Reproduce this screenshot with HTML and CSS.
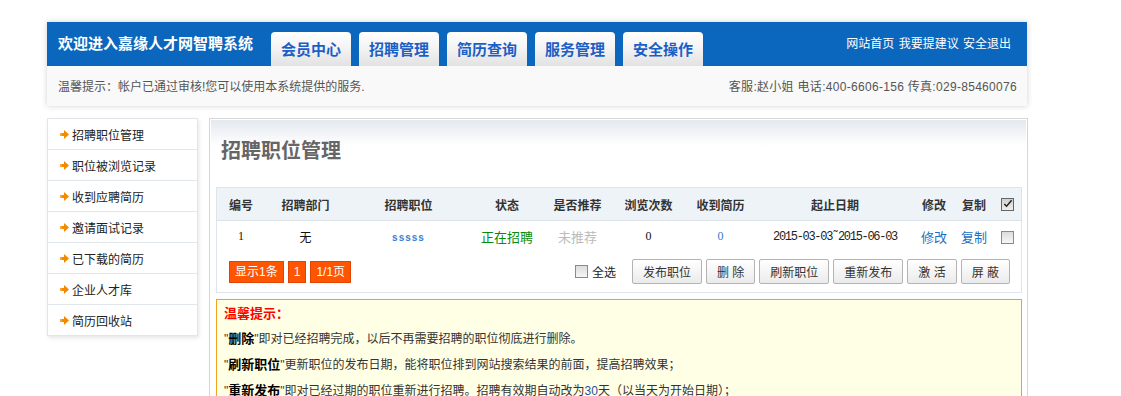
FILE: index.html
```html
<!DOCTYPE html>
<html lang="zh-CN">
<head>
<meta charset="utf-8">
<title>会员中心 - 招聘职位管理</title>
<link rel="stylesheet" href="styles.css">
</head>
<body>
<div class="page">

  <div class="top">
    <div class="topbar">
      <div class="logo">欢迎进入嘉缘人才网智聘系统</div>
      <ul class="tabs">
        <li><a href="#">会员中心</a></li>
        <li><a href="#">招聘管理</a></li>
        <li><a href="#">简历查询</a></li>
        <li><a href="#">服务管理</a></li>
        <li><a href="#">安全操作</a></li>
      </ul>
      <div class="links"><a href="#">网站首页</a> <a href="#">我要提建议</a> <a href="#">安全退出</a></div>
    </div>
    <div class="notice">
      <span>温馨提示：帐户已通过审核!您可以使用本系统提供的服务.</span>
      <span class="tel">客服:赵小姐 电话:400-6606-156 传真:029-85460076</span>
    </div>
  </div>

  <div class="body">
    <ul class="side">
      <li><a href="#"><i class="arrow"><svg width="9" height="9" viewBox="0 0 9 9"><rect x="0" y="3" width="2" height="3" fill="#f7a53a"/><rect x="2" y="3" width="3" height="3" fill="#f28a00"/><polygon points="4,0 9,4.5 4,9" fill="#f28a00"/></svg></i>招聘职位管理</a></li>
      <li><a href="#"><i class="arrow"><svg width="9" height="9" viewBox="0 0 9 9"><rect x="0" y="3" width="2" height="3" fill="#f7a53a"/><rect x="2" y="3" width="3" height="3" fill="#f28a00"/><polygon points="4,0 9,4.5 4,9" fill="#f28a00"/></svg></i>职位被浏览记录</a></li>
      <li><a href="#"><i class="arrow"><svg width="9" height="9" viewBox="0 0 9 9"><rect x="0" y="3" width="2" height="3" fill="#f7a53a"/><rect x="2" y="3" width="3" height="3" fill="#f28a00"/><polygon points="4,0 9,4.5 4,9" fill="#f28a00"/></svg></i>收到应聘简历</a></li>
      <li><a href="#"><i class="arrow"><svg width="9" height="9" viewBox="0 0 9 9"><rect x="0" y="3" width="2" height="3" fill="#f7a53a"/><rect x="2" y="3" width="3" height="3" fill="#f28a00"/><polygon points="4,0 9,4.5 4,9" fill="#f28a00"/></svg></i>邀请面试记录</a></li>
      <li><a href="#"><i class="arrow"><svg width="9" height="9" viewBox="0 0 9 9"><rect x="0" y="3" width="2" height="3" fill="#f7a53a"/><rect x="2" y="3" width="3" height="3" fill="#f28a00"/><polygon points="4,0 9,4.5 4,9" fill="#f28a00"/></svg></i>已下载的简历</a></li>
      <li><a href="#"><i class="arrow"><svg width="9" height="9" viewBox="0 0 9 9"><rect x="0" y="3" width="2" height="3" fill="#f7a53a"/><rect x="2" y="3" width="3" height="3" fill="#f28a00"/><polygon points="4,0 9,4.5 4,9" fill="#f28a00"/></svg></i>企业人才库</a></li>
      <li><a href="#"><i class="arrow"><svg width="9" height="9" viewBox="0 0 9 9"><rect x="0" y="3" width="2" height="3" fill="#f7a53a"/><rect x="2" y="3" width="3" height="3" fill="#f28a00"/><polygon points="4,0 9,4.5 4,9" fill="#f28a00"/></svg></i>简历回收站</a></li>
    </ul>

    <div class="main">
      <div class="main-in">
        <h2>招聘职位管理</h2>

        <div class="list">
          <table class="jobs">
            <colgroup>
              <col style="width:48px"><col style="width:81px"><col style="width:125px"><col style="width:72px">
              <col style="width:69px"><col style="width:73px"><col style="width:71px"><col style="width:158px">
              <col style="width:40px"><col style="width:40px"><col style="width:27px">
            </colgroup>
            <thead>
              <tr>
                <th>编号</th><th>招聘部门</th><th>招聘职位</th><th>状态</th><th>是否推荐</th>
                <th>浏览次数</th><th>收到简历</th><th>起止日期</th><th>修改</th><th>复制</th>
                <th><span class="chk on"><svg width="12" height="12" viewBox="0 0 12 12"><path d="M2.5 6 L5 8.5 L10.5 2" fill="none" stroke="#222" stroke-width="1.6"/></svg></span></th>
              </tr>
            </thead>
            <tbody>
              <tr>
                <td class="num">1</td>
                <td>无</td>
                <td><a class="job" href="#">sssss</a></td>
                <td class="green">正在招聘</td>
                <td class="gray">未推荐</td>
                <td class="num">0</td>
                <td class="num blue">0</td>
                <td class="date">2015-03-03˜2015-06-03</td>
                <td><a class="op" href="#">修改</a></td>
                <td><a class="op" href="#">复制</a></td>
                <td><span class="chk"></span></td>
              </tr>
            </tbody>
          </table>

          <div class="pager">
            <div class="pages">
              <span>显示1条</span><span>1</span><span>1/1页</span>
            </div>
            <label class="all"><span class="chk"></span>全选</label>
            <div class="btns">
              <button>发布职位</button>
              <button>删 除</button>
              <button>刷新职位</button>
              <button>重新发布</button>
              <button>激 活</button>
              <button>屏 蔽</button>
            </div>
          </div>
        </div>

        <div class="tips">
          <h3>温馨提示：</h3>
          <p>"<b>删除</b>"即对已经招聘完成，以后不再需要招聘的职位彻底进行删除。</p>
          <p>"<b>刷新职位</b>"更新职位的发布日期，能将职位排到网站搜索结果的前面，提高招聘效果；</p>
          <p>"<b>重新发布</b>"即对已经过期的职位重新进行招聘。招聘有效期自动改为<em>30</em>天（以当天为开始日期）；</p>
        </div>
      </div>
    </div>
  </div>

</div>
</body>
</html>
```

FILE: styles.css
```css
body {
  margin: 0;
  background: #fff;
  font-family: "Liberation Sans", "Noto Sans CJK SC", sans-serif;
  font-size: 12px;
  color: #333;
}

a {
  text-decoration: none;
}

ul {
  list-style: none;
  margin: 0;
  padding: 0;
}

.page {
  width: 980px;
  margin-left: 47px;
  padding-top: 22px;
}

/* header */
.top {
  box-shadow: 0 0 6px rgba(0, 0, 0, 0.18);
}

.topbar {
  display: flex;
  height: 44px;
  background: #0b67bd;
}

.logo {
  width: 213px;
  padding-left: 11px;
  line-height: 44px;
  color: #fff;
  font-size: 15px;
  font-weight: bold;
  white-space: nowrap;
}

.tabs {
  display: flex;
  align-self: flex-end;
  gap: 8px;
}

.tabs li a {
  display: block;
  width: 80px;
  height: 34px;
  line-height: 35px;
  text-align: center;
  font-size: 15px;
  font-weight: bold;
  color: #1b5fc6;
  border-radius: 4px 4px 0 0;
  background: linear-gradient(#ffffff 0, #f4f4f4 45%, #e2e2e2 100%);
}

.links {
  margin-left: auto;
  padding-right: 16px;
  line-height: 44px;
  font-size: 12px;
  word-spacing: 1px;
}

.links a {
  color: #fff;
}

.notice {
  display: flex;
  justify-content: space-between;
  height: 40px;
  line-height: 42px;
  padding: 0 10px 0 11px;
  background: #f9f9f9;
  color: #555;
  font-size: 12px;
}

.notice .tel {
  letter-spacing: 0.3px;
}

/* body */
.body {
  display: flex;
  align-items: flex-start;
  gap: 11px;
  margin-top: 12px;
}

.side {
  box-sizing: border-box;
  width: 151px;
  flex: none;
  border: 1px solid #e2e6eb;
  border-bottom: 0;
  box-shadow: 1px 2px 4px rgba(0, 0, 0, 0.1);
  background: #fff;
}

.side li {
  border-bottom: 1px solid #e2e7ed;
}

.side li a {
  display: flex;
  align-items: center;
  height: 30px;
  padding-left: 12px;
  color: #222;
  font-size: 12px;
}

.arrow {
  display: flex;
  margin-right: 3px;
}

.main {
  flex: 1;
  border: 1px solid #d6d6d6;
  padding: 1px;
  background: #fff;
}

.main-in {
  padding: 0 4px 0 5px;
  background: linear-gradient(#e4e9ef 0, #ffffff 26px);
}

.main-in h2 {
  margin: 0;
  padding: 19px 0 0 5px;
  line-height: 24px;
  font-size: 20px;
  font-weight: bold;
  color: #666;
}

.list {
  margin-top: 24px;
  border: 1px solid #dfe4ea;
}

.jobs {
  width: 100%;
  border-collapse: collapse;
  table-layout: fixed;
}

.jobs th {
  height: 32px;
  background: #eef3f8;
  border-bottom: 1px solid #dde3ea;
  font-size: 12px;
  font-weight: bold;
  color: #333;
  padding: 0;
}

.jobs td {
  height: 31px;
  text-align: center;
  padding: 0;
  color: #111;
  font-size: 12px;
}

.jobs .num {
  font-family: "Liberation Serif", serif;
  font-size: 12px;
}

.jobs td.blue {
  color: #2f7bcc;
}

.jobs .job {
  color: #3a80d0;
  font-size: 10px;
  font-weight: bold;
  letter-spacing: 1px;
}

.jobs .green {
  color: #0a8a0a;
  font-size: 13px;
}

.jobs .gray {
  color: #bbb;
  font-size: 13px;
}

.jobs .date {
  font-family: "Liberation Mono", monospace;
  font-size: 12px;
  letter-spacing: -1.3px;
  color: #222;
}

.jobs .op {
  color: #1f6fc4;
  font-size: 13px;
}

.chk {
  display: inline-flex;
  width: 11px;
  height: 11px;
  border: 1px solid #8a8a8a;
  background: linear-gradient(#dcdcdc, #f6f6f6);
  vertical-align: middle;
}

.chk.on {
  background: linear-gradient(#d0d0d0, #eeeeee);
  border-color: #666;
}

.chk svg {
  margin: -1px 0 0 0;
}

.pager {
  display: flex;
  align-items: center;
  padding: 7px 11px 8px 12px;
}

.pages {
  display: flex;
  gap: 4px;
}

.pages span {
  height: 20px;
  line-height: 21px;
  padding: 0 5px;
  background: #ff5400;
  border: 1px solid #e04600;
  color: #fff;
  font-size: 12px;
}

.all {
  display: flex;
  align-items: center;
  gap: 4px;
  margin-left: auto;
  margin-right: 16px;
  font-size: 12px;
  color: #222;
}

.btns {
  display: flex;
  gap: 4px;
}

.btns button {
  height: 25px;
  padding: 0 10px;
  border: 1px solid #b3b3b3;
  border-radius: 2px;
  background: linear-gradient(#ffffff, #ebebeb);
  font-family: "Liberation Sans", "Noto Sans CJK SC", sans-serif;
  font-size: 12px;
  color: #333;
}

.tips {
  margin-top: 6px;
  padding: 1px 7px 4px;
  border: 1px solid #f0a024;
  background: #ffffe6;
}

.tips h3 {
  margin: 0;
  line-height: 25px;
  font-size: 13px;
  color: #f00;
}

.tips p {
  margin: 0;
  line-height: 25px;
  font-size: 12px;
  color: #333;
}

.tips b {
  font-size: 13px;
  color: #000;
}

.tips em {
  font-style: normal;
  color: #2a4fa0;
}
```
